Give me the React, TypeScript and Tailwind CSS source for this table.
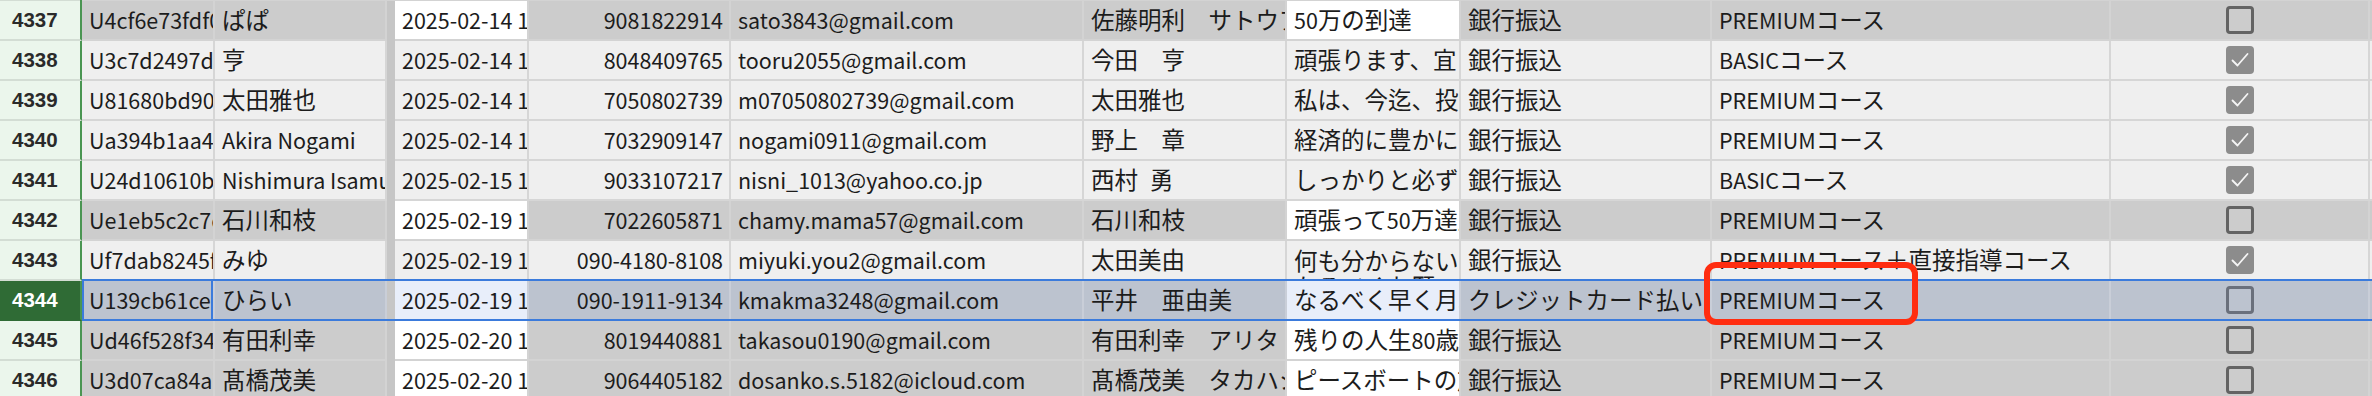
import React from 'react';

type Kind = 'dark' | 'light' | 'sel';
type R = {
  n: number;
  k: Kind;
  a: string;
  b: string;
  c: string;
  d: string;
  e: string;
  f: string;
  g: string;
  h: string;
  i: string;
  j: boolean;
  wrap?: boolean;
};

const rows: R[] = [
  { n: 4337, k: 'dark', a: 'U4cf6e73fdf0c2a91', b: 'ぱぱ', c: '2025-02-14 10:12:33', d: '9081822914', e: 'sato3843@gmail.com', f: '佐藤明利　サトウアキトシ', g: '50万の到達', h: '銀行振込', i: 'PREMIUMコース', j: false },
  { n: 4338, k: 'light', a: 'U3c7d2497d1e5f0a2', b: '亨', c: '2025-02-14 11:40:02', d: '8048409765', e: 'tooru2055@gmail.com', f: '今田　亨', g: '頑張ります、宜しくお願いします', h: '銀行振込', i: 'BASICコース', j: true },
  { n: 4339, k: 'light', a: 'U81680bd90e4c1b7a', b: '太田雅也', c: '2025-02-14 12:05:47', d: '7050802739', e: 'm07050802739@gmail.com', f: '太田雅也', g: '私は、今迄、投資をしてきました', h: '銀行振込', i: 'PREMIUMコース', j: true },
  { n: 4340, k: 'light', a: 'Ua394b1aa4f2d9c06', b: 'Akira Nogami', c: '2025-02-14 15:21:10', d: '7032909147', e: 'nogami0911@gmail.com', f: '野上　章', g: '経済的に豊かになりたい', h: '銀行振込', i: 'PREMIUMコース', j: true },
  { n: 4341, k: 'light', a: 'U24d10610b7a3e5f1', b: 'Nishimura Isamu', c: '2025-02-15 10:03:55', d: '9033107217', e: 'nisni_1013@yahoo.co.jp', f: '西村\u2002勇', g: 'しっかりと必ず達成します', h: '銀行振込', i: 'BASICコース', j: true },
  { n: 4342, k: 'dark', a: 'Ue1eb5c2c7c0f8d42', b: '石川和枝', c: '2025-02-19 10:44:18', d: '7022605871', e: 'chamy.mama57@gmail.com', f: '石川和枝', g: '頑張って50万達成', h: '銀行振込', i: 'PREMIUMコース', j: false },
  { n: 4343, k: 'light', a: 'Uf7dab8245f1e0c93', b: 'みゆ', c: '2025-02-19 13:27:36', d: '090-4180-8108', e: 'miyuki.you2@gmail.com', f: '太田美由', g: '何も分からないなるべくお願い', h: '銀行振込', i: 'PREMIUMコース＋直接指導コース', j: true, wrap: true },
  { n: 4344, k: 'sel', a: 'U139cb61cee7d2f08', b: 'ひらい', c: '2025-02-19 16:09:51', d: '090-1911-9134', e: 'kmakma3248@gmail.com', f: '平井　亜由美', g: 'なるべく早く月50万', h: 'クレジットカード払い', i: 'PREMIUMコース', j: false },
  { n: 4345, k: 'dark', a: 'Ud46f528f34a9b1c7', b: '有田利幸', c: '2025-02-20 10:31:24', d: '8019440881', e: 'takasou0190@gmail.com', f: '有田利幸　アリタトシユキ', g: '残りの人生80歳まで', h: '銀行振込', i: 'PREMIUMコース', j: false },
  { n: 4346, k: 'dark', a: 'U3d07ca84a7e2b519', b: '髙橋茂美', c: '2025-02-20 14:56:03', d: '9064405182', e: 'dosanko.s.5182@icloud.com', f: '髙橋茂美　タカハシシゲミ', g: 'ピースボートの旅', h: '銀行振込', i: 'PREMIUMコース', j: false },
];

const grayBg: Record<Kind, string> = {
  dark: 'bg-[#cccccc]',
  light: 'bg-[#efefef]',
  sel: 'bg-[#bcc3cf]',
};
const whiteBg: Record<Kind, string> = {
  dark: 'bg-white',
  light: 'bg-[#efefef]',
  sel: 'bg-[#e8eefa]',
};
const lineC: Record<Kind, string> = {
  dark: 'border-[#d3d3d3]',
  light: 'border-[#d6d6d6]',
  sel: 'border-[#c9ced8]',
};

const base =
  'h-full shrink-0 overflow-hidden whitespace-nowrap border-r-2 border-b-2 flex items-center';

const CJK = /[\u2002\u3000-\u30ff\u3400-\u9fff\uf900-\ufaff\uff00-\uffef]+|[^\u2002\u3000-\u30ff\u3400-\u9fff\uf900-\ufaff\uff00-\uffef]+/g;
const IS_CJK = /^[\u2002\u3000-\u30ff\u3400-\u9fff\uf900-\ufaff\uff00-\uffef]/;

function T({ s }: { s: string }) {
  const parts = s.match(CJK) || [];
  return (
    <span>
      {parts.map((p, idx) =>
        IS_CJK.test(p) ? (
          <span key={idx} className="text-[23.5px]">
            {p}
          </span>
        ) : (
          <span key={idx} className="text-[21.5px]">
            {p}
          </span>
        )
      )}
    </span>
  );
}

function Check({ checked, sel }: { checked: boolean; sel: boolean }) {
  if (checked) {
    return (
      <div className="w-[28px] h-[28px] rounded-[4px] bg-[#8c8c8c] flex items-center justify-center">
        <svg width="28" height="28" viewBox="0 0 28 28">
          <path
            d="M6.5 14.5 L11.5 19.5 L21.5 8"
            stroke="#f4f4f4"
            strokeWidth="1.8"
            fill="none"
            strokeLinecap="round"
            strokeLinejoin="round"
          />
        </svg>
      </div>
    );
  }
  return (
    <div
      className={`w-[28px] h-[28px] rounded-[4px] border-[3px] ${
        sel ? 'border-[#6a707c]' : 'border-[#636363]'
      }`}
    />
  );
}

function Row({ r }: { r: R }) {
  const g = grayBg[r.k];
  const w = whiteBg[r.k];
  const l = lineC[r.k];
  const sel = r.k === 'sel';
  return (
    <div className="flex h-[40px]">
      <div
        className={`w-[82px] h-full shrink-0 flex items-center pl-[12px] border-r-2 border-b-2 border-r-[#4a9552] font-['Liberation_Sans',sans-serif] font-bold text-[20.5px] ${
          sel
            ? 'bg-[#2f6b35] text-white border-b-[#2f6b35]'
            : 'bg-[#ebf6ec] text-[#2a2a2a] border-b-[#d3ddd4]'
        }`}
      >
        {r.n}
      </div>
      <div className={`${base} ${g} ${l} w-[133px] pl-[7px]`}><T s={r.a} /></div>
      <div className={`${base} ${g} ${l} w-[172px] pl-[7px]`}><T s={r.b} /></div>
      <div className="w-[8px] h-full shrink-0 bg-[#c6c6c6]" />
      <div className={`${base} ${w} ${l} w-[134px] pl-[7px]`}><T s={r.c} /></div>
      <div className={`${base} ${g} ${l} w-[202px] justify-end pr-[6px]`}><T s={r.d} /></div>
      <div className={`${base} ${g} ${l} w-[353px] pl-[7px]`}><T s={r.e} /></div>
      <div className={`${base} ${g} ${l} w-[203px] pl-[7px]`}><T s={r.f} /></div>
      {r.wrap ? (
        <div className={`h-full shrink-0 overflow-hidden border-r-2 border-b-2 ${w} ${l} w-[174px] pl-[7px]`}>
          <div className="w-[166px] whitespace-normal leading-[26px] pt-[6px]"><T s={r.g} /></div>
        </div>
      ) : (
        <div className={`${base} ${w} ${l} w-[174px] pl-[7px]`}><T s={r.g} /></div>
      )}
      <div className={`${base} ${g} ${l} w-[251px] pl-[7px]`}><T s={r.h} /></div>
      <div className={`${base} ${g} ${l} w-[399px] pl-[7px]`}><T s={r.i} /></div>
      <div className={`${base} ${g} ${l} w-[259px] justify-center`}>
        <Check checked={r.j} sel={sel} />
      </div>
      <div className={`h-full flex-1 border-b-2 ${g} ${l}`} />
    </div>
  );
}

export default function App() {
  return (
    <div className="relative w-[2372px] h-[396px] overflow-hidden bg-[#efefef] text-[#1c1c1c] font-['Noto_Sans_CJK_JP','Noto_Sans',sans-serif] text-[23.5px]">
      <div className="flex h-[1px]">
        <div className="w-[82px] shrink-0 bg-[#d3ddd4] border-r-2 border-[#4a9552]" />
        <div className="flex-1 bg-[#d3d3d3]" />
      </div>
      {rows.map((r) => (
        <Row key={r.n} r={r} />
      ))}
      {/* row selection outline */}
      <div className="absolute left-[82px] right-0 top-[279px] h-[42px] border-y-2 border-[#3b7bdc] pointer-events-none" />
      {/* active cell */}
      <div className="absolute left-[82px] top-[279px] w-[131px] h-[42px] border-2 border-[#3b7bdc] pointer-events-none" />
      {/* red annotation */}
      <div className="absolute left-[1704px] top-[262px] w-[214px] h-[63px] border-[6px] border-[#ff2d10] rounded-[12px] pointer-events-none" />
    </div>
  );
}
